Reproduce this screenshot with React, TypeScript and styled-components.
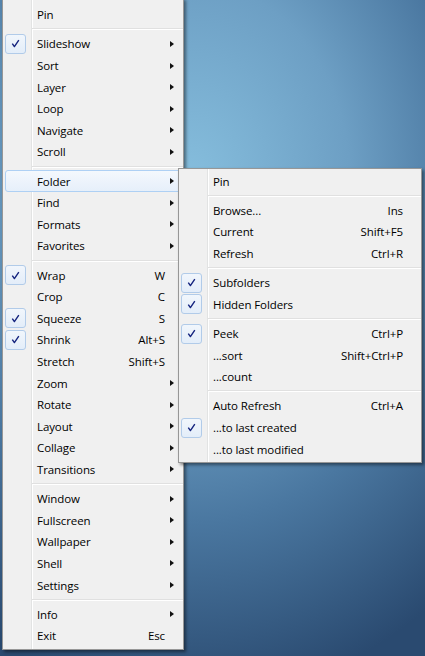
import React from "react";
import styled, { createGlobalStyle, css } from "styled-components";

type Entry =
  | { kind: "sep" }
  | {
      kind: "item";
      label: string;
      checked?: boolean;
      shortcut?: string;
      sub?: boolean;
      active?: boolean;
    };

const sep: Entry = { kind: "sep" };
const it = (label: string, opts: Omit<Extract<Entry, { kind: "item" }>, "kind" | "label"> = {}): Entry => ({
  kind: "item",
  label,
  ...opts,
});

const mainItems: Entry[] = [
  it("Pin"),
  sep,
  it("Slideshow", { checked: true, sub: true }),
  it("Sort", { sub: true }),
  it("Layer", { sub: true }),
  it("Loop", { sub: true }),
  it("Navigate", { sub: true }),
  it("Scroll", { sub: true }),
  sep,
  it("Folder", { sub: true, active: true }),
  it("Find", { sub: true }),
  it("Formats", { sub: true }),
  it("Favorites", { sub: true }),
  sep,
  it("Wrap", { checked: true, shortcut: "W" }),
  it("Crop", { shortcut: "C" }),
  it("Squeeze", { checked: true, shortcut: "S" }),
  it("Shrink", { checked: true, shortcut: "Alt+S" }),
  it("Stretch", { shortcut: "Shift+S" }),
  it("Zoom", { sub: true }),
  it("Rotate", { sub: true }),
  it("Layout", { sub: true }),
  it("Collage", { sub: true }),
  it("Transitions", { sub: true }),
  sep,
  it("Window", { sub: true }),
  it("Fullscreen", { sub: true }),
  it("Wallpaper", { sub: true }),
  it("Shell", { sub: true }),
  it("Settings", { sub: true }),
  sep,
  it("Info", { sub: true }),
  it("Exit", { shortcut: "Esc" }),
];

const folderItems: Entry[] = [
  it("Pin"),
  sep,
  it("Browse...", { shortcut: "Ins" }),
  it("Current", { shortcut: "Shift+F5" }),
  it("Refresh", { shortcut: "Ctrl+R" }),
  sep,
  it("Subfolders", { checked: true }),
  it("Hidden Folders", { checked: true }),
  sep,
  it("Peek", { checked: true, shortcut: "Ctrl+P" }),
  it("...sort", { shortcut: "Shift+Ctrl+P" }),
  it("...count"),
  sep,
  it("Auto Refresh", { shortcut: "Ctrl+A" }),
  it("...to last created", { checked: true }),
  it("...to last modified"),
];

const GlobalStyle = createGlobalStyle`
  html, body {
    margin: 0;
    padding: 0;
    background: #2c4c72;
  }
  body {
    font-family: "Segoe UI", "Open Sans", "Noto Sans", sans-serif;
  }
`;

const Desktop = styled.div`
  position: relative;
  width: 425px;
  height: 656px;
  overflow: hidden;
  background:
    radial-gradient(ellipse 420px 520px at 190px 180px, #86bedd 0%, #6d9fc4 38%, #4a77a0 66%, #2a4a70 100%);
`;

const Menu = styled.div<{ $width: number; $flyout?: boolean }>`
  width: ${({ $width }) => $width}px;
  box-sizing: border-box;
  border: 1px solid #979797;
  box-shadow: 2px 2px 3px rgba(0, 0, 0, 0.45);
  /* icon gutter: grey rule followed by a white one */
  background:
    linear-gradient(
      to right,
      transparent 28px,
      #e2e3e3 28px,
      #e2e3e3 29px,
      #ffffff 29px,
      #ffffff 30px,
      transparent 30px
    ),
    #f0f0f0;
  ${({ $flyout }) =>
    $flyout
      ? css`
          position: absolute;
          left: 178px;
          top: 168px;
          padding: 1.4px 0 2px;
        `
      : css`
          margin: -2px 0 0 2px;
          padding: 5px 0 2.2px;
        `}
`;

const Row = styled.div<{ $active?: boolean }>`
  height: 21.6px;
  box-sizing: border-box;
  margin: 0 1px 0 2px;
  padding-right: 8px;
  display: flex;
  align-items: center;
  font-size: 11.5px;
  color: #000;
  border: 1px solid transparent;
  border-radius: 3px;
  ${({ $active }) =>
    $active &&
    css`
      border-color: #aed0f4;
      background: linear-gradient(to bottom, #f4f8fd 0%, #e6effa 100%);
    `}
`;

const CheckSlot = styled.div<{ $on?: boolean }>`
  flex: 0 0 auto;
  width: 21px;
  height: 20px;
  box-sizing: border-box;
  margin-left: -1px;
  border-radius: 3px;
  display: flex;
  align-items: center;
  justify-content: center;
  ${({ $on }) =>
    $on &&
    css`
      border: 1px solid #b1cbe9;
      background: linear-gradient(to bottom, #f1f6fc, #e3edf9);
    `}
`;

const Label = styled.span`
  flex: 1 1 auto;
  margin-left: 11px;
  white-space: nowrap;
  letter-spacing: -0.1px;
`;

const Shortcut = styled.span`
  flex: 0 0 auto;
  margin-right: 5px;
  white-space: nowrap;
  letter-spacing: -0.1px;
`;

const Arrow = styled.span<{ $show?: boolean }>`
  flex: 0 0 auto;
  width: 0;
  height: 0;
  margin-right: -1px;
  border-style: solid;
  border-width: 3.5px 0 3.5px 4px;
  border-color: transparent transparent transparent ${({ $show }) => ($show ? "#111" : "transparent")};
`;

const Separator = styled.div`
  height: 7.6px;
  display: flex;
  align-items: center;
  padding-left: 29px;
  &::after {
    content: "";
    flex: 1;
    height: 0;
    border-top: 1px solid #e0e0e0;
    border-bottom: 1px solid #ffffff;
  }
`;

function Check() {
  return (
    <svg width="9" height="9" viewBox="0 0 9 9">
      <path d="M1.3 4.6 L3.4 7.6 L7.8 1.2" fill="none" stroke="#14237e" strokeWidth="1.4" strokeLinejoin="round" />
    </svg>
  );
}

function MenuList({ items }: { items: Entry[] }) {
  return (
    <>
      {items.map((e, i) =>
        e.kind === "sep" ? (
          <Separator key={i} />
        ) : (
          <Row key={i} $active={e.active}>
            <CheckSlot $on={e.checked}>{e.checked && <Check />}</CheckSlot>
            <Label>{e.label}</Label>
            {e.shortcut && <Shortcut>{e.shortcut}</Shortcut>}
            <Arrow $show={e.sub} />
          </Row>
        )
      )}
    </>
  );
}

export default function App() {
  return (
    <>
      <GlobalStyle />
      <Desktop>
        <Menu $width={182}>
          <MenuList items={mainItems} />
        </Menu>
        <Menu $width={244} $flyout>
          <MenuList items={folderItems} />
        </Menu>
      </Desktop>
    </>
  );
}
